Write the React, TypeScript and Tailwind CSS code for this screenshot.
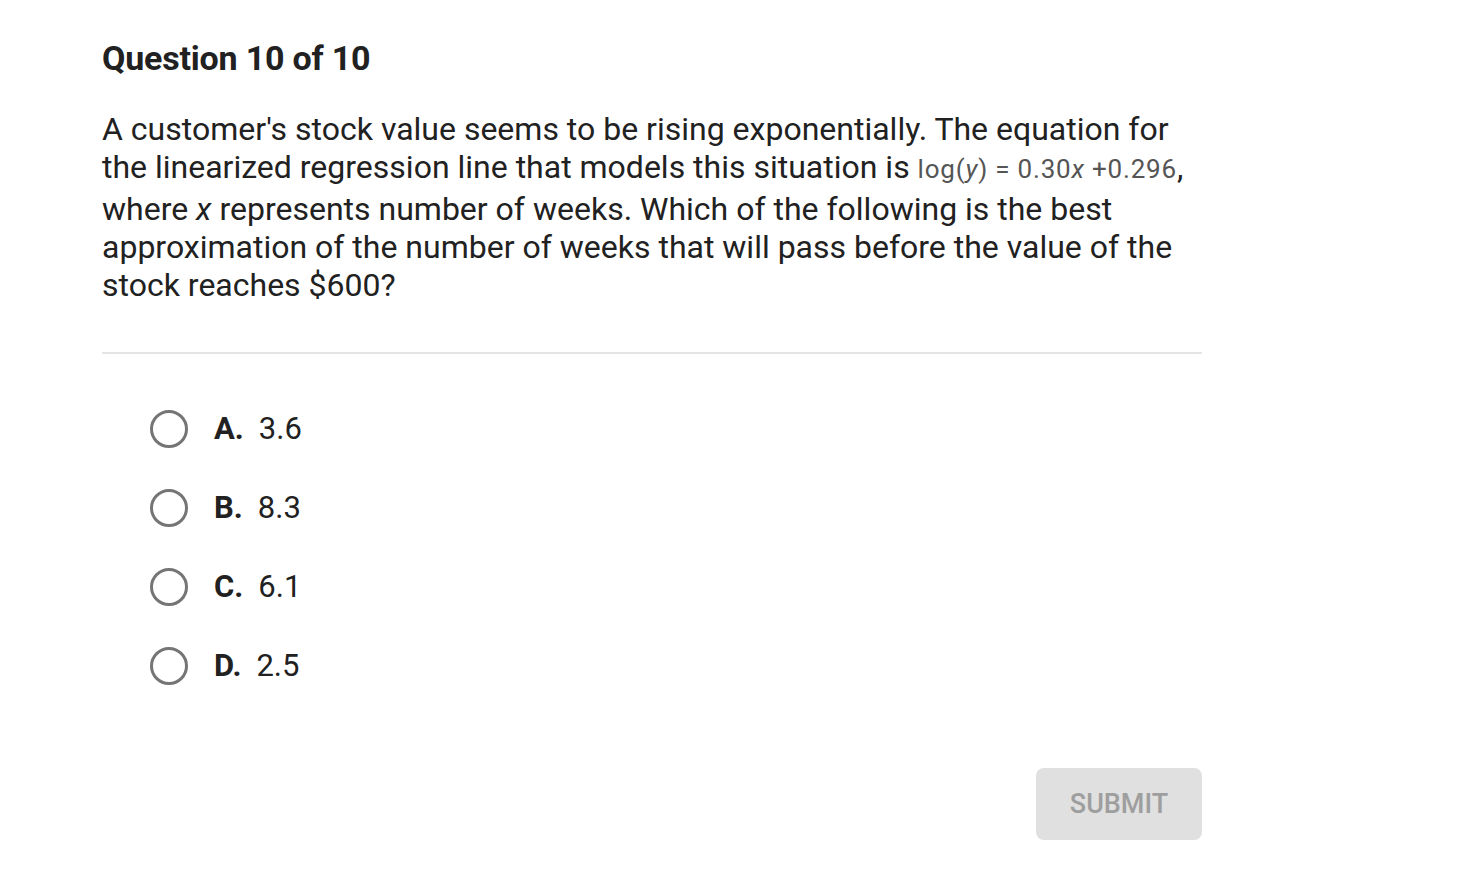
import React from "react";

const options = [
  { letter: "A.", value: "3.6" },
  { letter: "B.", value: "8.3" },
  { letter: "C.", value: "6.1" },
  { letter: "D.", value: "2.5" },
];

export default function App() {
  return (
    <div className="min-h-[888px] bg-white font-['Roboto',sans-serif] text-[#212121]">
      <div className="w-[1100px] ml-[102px] pt-[38px]">
        <h1 className="text-[34px] font-bold leading-[40px] tracking-[-0.2px]">Question 10 of 10</h1>
        <p className="mt-[32px] text-[32px] leading-[38px]">
          A customer's stock value seems to be rising exponentially. The equation for the
          linearized regression line that models this situation is{" "}
          <span className="inline-block align-baseline pb-[6px] text-[26px] leading-[30px] text-[#555] tracking-[0.8px]">
            log(<i>y</i>) = 0.30<i>x</i> +0.296
          </span>
          , where <i>x</i> represents number of weeks. Which of the following is the best
          approximation of the number of weeks that will pass before the value of the stock
          reaches $600?
        </p>
        <div className="mt-[48px] h-[2px] bg-[#e4e4e4]" />
        <div className="mt-[56px] ml-[48px] flex flex-col gap-[41px]">
          {options.map((o) => (
            <div key={o.letter} className="flex items-center h-[38px]">
              <div className="w-[38px] h-[38px] rounded-full border-[3px] border-[#757575]" />
              <span className="ml-[26px] text-[31px] font-bold">{o.letter}</span>
              <span className="ml-[15px] text-[31px]">{o.value}</span>
            </div>
          ))}
        </div>
        <div className="mt-[83px] flex justify-end">
          <button className="w-[166px] h-[72px] rounded-[8px] bg-[#e0e0e0] text-[27px] font-medium text-[#9e9e9e]">
            SUBMIT
          </button>
        </div>
      </div>
    </div>
  );
}
